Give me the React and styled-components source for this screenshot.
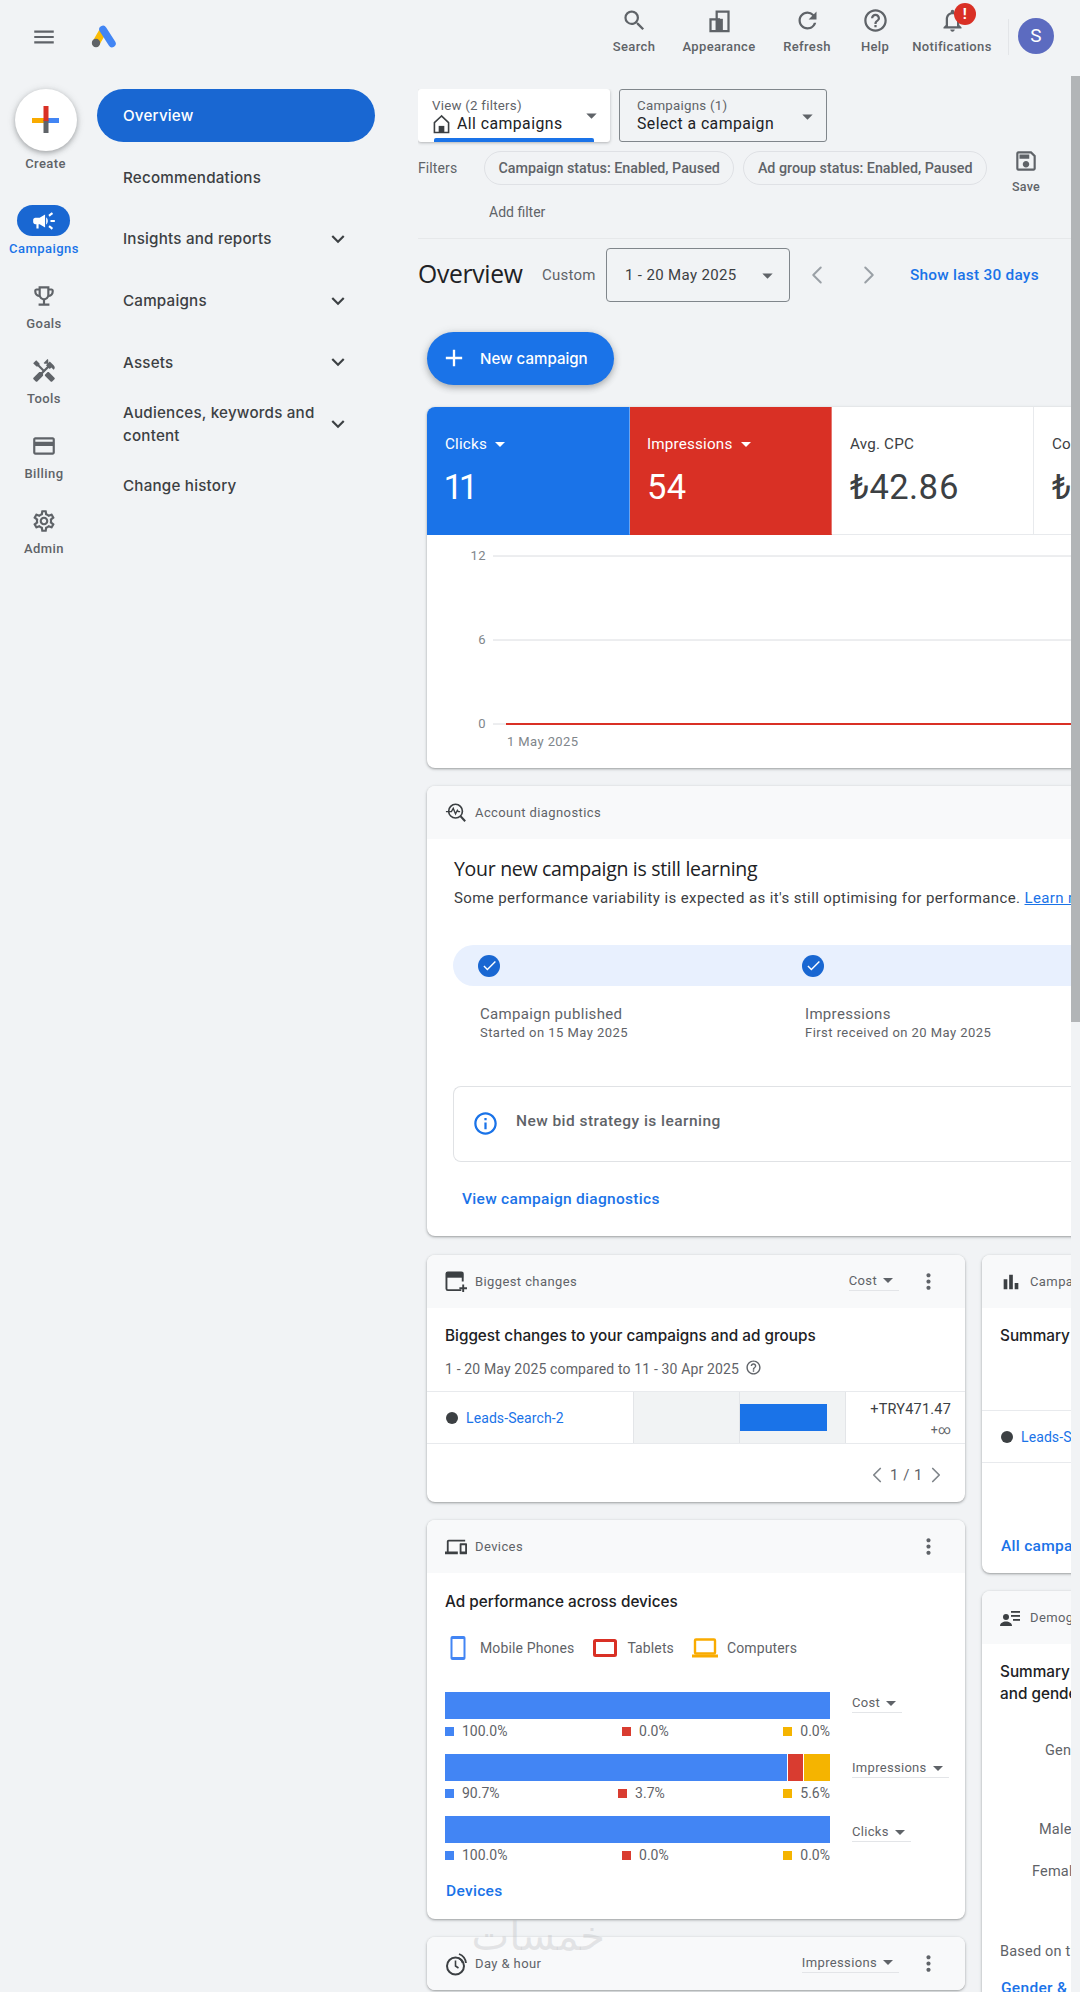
import React from 'react';
import styled, { createGlobalStyle } from 'styled-components';
import { ChevronLeft, ChevronRight } from 'lucide-react';
import {
  MdMenu, MdSearch, MdRefresh, MdHelpOutline, MdNotificationsNone, MdOutlineSave, MdArrowDropDown,
  MdExpandMore, MdAdd, MdCheck, MdMoreVert, MdOutlineInfo, MdBarChart,
  MdOutlineDevices, MdCampaign, MdOutlineEmojiEvents, MdHandyman, MdOutlineCreditCard,
  MdOutlineSettings, MdOutlineHelpOutline,
} from 'react-icons/md';

const sans = `Roboto, "Liberation Sans", sans-serif`;
const gsans = `Inter, "Open Sans", Roboto, sans-serif`;
const osans = `"Open Sans", Roboto, sans-serif`;

const Global = createGlobalStyle`
  html, body { margin: 0; padding: 0; background: #f1f3f5; }
  body { font-family: ${sans}; color: #3c4043; }
  * { box-sizing: border-box; }
`;

const Page = styled.div`
  position: relative; width: 1080px; height: 1992px; overflow: hidden; background: #f1f3f5;
`;
const TopBar = styled.header`
  display: flex; align-items: flex-start; height: 72px; padding-right: 26px;
`;
const Burger = styled.div`
  display: flex; margin: 24px 0 0 31px; color: #5f6368; font-size: 26px; width: 58px;
`;
const Logo = styled.svg`
  width: 30px; height: 28px; margin-top: 22px;
`;
const Tools = styled.div`
  display: flex; margin-left: auto; padding-top: 7px;
`;
const ToolItem = styled.div`
  position: relative; display: flex; flex-direction: column; align-items: center;
  width: ${p => p.$w}px; color: #5f6368; font-size: 13px; font-weight: 500; letter-spacing: .35px;
  svg { font-size: 27px; display: block; }
  span { margin-top: 5px; line-height: 16px; white-space: nowrap; }
`;
const Badge = styled.b`
  position: absolute; top: -4px; left: 50%; margin-left: 2px; width: 22px; height: 22px; border-radius: 50%;
  background: #d93025; color: #fff; font-size: 15px; line-height: 22px; text-align: center;
`;
const VDivider = styled.div`
  width: 1px; height: 36px; background: #e3e5e8; margin: 19px 9px 0 9px;
`;
const Avatar = styled.div`
  width: 36px; height: 36px; border-radius: 50%; background: #5c6bc0; color: #fff; margin-top: 18px;
  font-size: 19px; line-height: 36px; text-align: center;
`;
const Body = styled.div`
  display: flex; align-items: flex-start; padding-top: 17px;
`;
const Rail = styled.nav`
  display: flex; flex-direction: column; align-items: center; width: 88px; flex: none;
`;
const CreateButton = styled.div`
  display: flex; align-items: center; justify-content: center; width: 62px; height: 62px; margin-left: 3px;
  border-radius: 50%; background: #fff; box-shadow: 0 2px 5px rgba(60,64,67,.35), 0 1px 8px rgba(60,64,67,.15);
`;
const CreateLabel = styled.div`
  margin: 5px 0 33px 3px; font-size: 13px; line-height: 16px; font-weight: 500; color: #5f6368; letter-spacing: .4px;
`;
const RailItem = styled.div`
  display: flex; flex-direction: column; align-items: center; height: 75px;
  color: ${p => (p.$active ? '#1a73e8' : '#5f6368')};
  font-size: 13px; font-weight: 500; letter-spacing: .45px; line-height: 16px;
  span { margin-top: 5px; }
`;
const RailIcon = styled.div`
  display: flex; align-items: center; justify-content: center; width: 53px; height: 31px; font-size: 26px;
  border-radius: 16px; background: ${p => (p.$active ? '#1967d2' : 'transparent')};
  color: ${p => (p.$active ? '#fff' : '#5f6368')};
`;
const SideNav = styled.nav`
  width: 278px; flex: none; margin-left: 9px;
`;
const NavItem = styled.div`
  display: flex; align-items: center; justify-content: space-between; min-height: 53px; padding: 0 26px 0 26px;
  margin-bottom: 8.7px; border-radius: 27px; font-family: ${gsans}; font-size: 15.2px; font-weight: 500; line-height: 23px; letter-spacing: .2px;
  background: ${p => (p.$active ? '#1967d2' : 'transparent')};
  color: ${p => (p.$active ? '#fff' : '#3c4043')};
  svg { font-size: 26px; flex: none; color: #3c4043; margin-right: -2px; }
`;
const Main = styled.main`
  width: 653px; margin-left: 43px; flex: none; overflow: hidden;
`;
const SelectorRow = styled.div`
  display: flex; gap: 9px; height: 53px;
`;
const Selector = styled.div`
  position: relative; display: flex; flex-direction: column; justify-content: center; width: ${p => p.$w}px;
  padding-left: ${p => p.$pl}px; border-radius: 3px; background: ${p => (p.$raised ? '#fff' : 'transparent')};
  border: ${p => (p.$raised ? 'none' : '1px solid #80868b')};
  box-shadow: ${p => (p.$raised ? '0 1px 3px rgba(60,64,67,.35)' : 'none')};
  overflow: hidden;
`;
const SelLabel = styled.div`
  font-size: 13.3px; line-height: 17px; color: #5f6368; letter-spacing: .25px;
`;
const SelValue = styled.div`
  display: flex; align-items: center; gap: 7px; font-size: 15.8px; font-weight: 400; line-height: 20px; color: #202124; letter-spacing: .45px;
`;
const SelArrow = styled.div`
  position: absolute; right: 6px; top: 14px; font-size: 25px; color: #5f6368; display: flex;
`;
const BlueTab = styled.div`
  position: absolute; left: 16px; right: 16px; bottom: 0; height: 4px; background: #1a73e8; border-radius: 2px 2px 0 0;
`;
const FilterArea = styled.div`
  display: flex; height: 88px; margin-top: 9px; padding-right: 15px; border-bottom: 1px solid #e6e8ea;
`;
const FilterLabel = styled.div`
  width: 66px; flex: none; line-height: 34px; font-size: 14px; color: #5f6368; letter-spacing: .1px;
`;
const FilterBody = styled.div`
  flex: 1;
`;
const ChipRow = styled.div`
  display: flex; gap: 9px;
`;
const Chip = styled.div`
  height: 34px; line-height: 32px; padding: 0 13.5px; border: 1px solid #dfe1e5; border-radius: 17px;
  font-size: 14.3px; font-weight: 500; color: #5f6368; white-space: nowrap;
`;
const AddFilter = styled.div`
  margin: 17px 0 0 5px; font-size: 14px; line-height: 20px; color: #5f6368;
`;
const SaveCol = styled.div`
  display: flex; flex-direction: column; align-items: center; width: 60px; flex: none; color: #5f6368; margin-top: -3px;
  font-size: 12.5px; font-weight: 500; letter-spacing: .2px;
  svg { font-size: 26px; display: block; }
  span { margin-top: 5px; }
`;
const DateRow = styled.div`
  display: flex; align-items: center; height: 54px; margin-top: 9px;
`;
const PageTitle = styled.h1`
  margin: -3px 0 0; width: 124px; font-size: 24.7px; font-weight: 400; color: #202124; font-family: ${osans}; letter-spacing: -.3px;
`;
const Custom = styled.div`
  width: 64px; font-size: 15px; color: #5f6368; letter-spacing: .25px;
`;
const DateBox = styled.div`
  display: flex; align-items: center; justify-content: space-between; width: 184px; height: 54px;
  padding: 0 9px 0 18px; border: 1px solid #80868b; border-radius: 4px;
  font-size: 15px; color: #3c4043; letter-spacing: .35px;
  svg { font-size: 25px; color: #5f6368; }
`;
const DateNav = styled.div`
  display: flex; align-items: center; justify-content: center; width: 52px; color: #9aa0a6;
  margin-left: ${p => p.$ml || 0}px;
`;
const ShowLast = styled.div`
  margin-left: 15px; font-size: 15.4px; font-weight: 500; color: #1a73e8; letter-spacing: .25px; white-space: nowrap;
`;
const Content = styled.div`
  padding-left: 9px; width: 1300px;
`;
const NewCampaign = styled.div`
  display: flex; align-items: center; width: 187px; height: 53px; margin-top: 30px; padding-left: 13px; gap: 12px;
  border-radius: 27px; background: #1a73e8; color: #fff; font-size: 15.1px; font-family: ${gsans}; font-weight: 500; padding-bottom: 1px;
  box-shadow: 0 3px 6px rgba(60,64,67,.3), 0 1px 10px rgba(60,64,67,.15);
  svg { font-size: 28px; }
`;
const Card = styled.section`
  width: ${p => p.$w || 1100}px; height: ${p => (p.$h ? `${p.$h}px` : 'auto')}; margin-top: ${p => p.$mt ?? 18}px; border-radius: 8px; background: #fff; overflow: hidden;
  box-shadow: 0 1px 2px rgba(60,64,67,.35), 0 1px 3px 1px rgba(60,64,67,.12);
`;
const StatRow = styled.div`
  display: flex; height: 128px;
`;
const Stat = styled.div`
  width: ${p => p.$w || 202}px; flex: none; padding: 27px 0 0 ${p => p.$pl ?? 18}px; background: ${p => p.$bg || '#fff'};
  color: ${p => (p.$bg ? '#fff' : '#3c4043')}; border-right: 1px solid ${p => (p.$bg ? 'rgba(255,255,255,.35)' : '#e8eaed')};
  border-bottom: 1px solid ${p => (p.$bg ? 'transparent' : '#e8eaed')};
`;
const StatLabel = styled.div`
  display: flex; align-items: center; height: 20px; font-size: 15.2px; letter-spacing: .2px;
  svg { font-size: 24px; margin-left: 1px; }
`;
const StatValue = styled.div`
  margin-top: 12px; font-size: 34.5px; line-height: 42px; letter-spacing: .3px; font-variant-numeric: proportional-nums;
`;
const Chart = styled.svg`
  display: block; width: 700px; height: 233px;
  text { font-family: ${sans}; font-size: 13px; fill: #80868b; letter-spacing: .4px; }
`;
const CardHead = styled.div`
  display: flex; align-items: center; height: 53px; padding: 0 24px 0 18px; background: #f8f9fa; font-size: 13px; color: #5f6368; letter-spacing: .4px;
`;
const HeadIcon = styled.div`
  display: flex; width: 30px; flex: none; font-size: 22px; color: #3c4043;
`;
const HeadSelect = styled.div`
  display: flex; align-items: center; height: 20px; margin-left: auto; margin-top: -2px; border-bottom: 1px solid #e3e5e8; font-size: 13px; color: #5f6368; letter-spacing: .35px;
  svg { font-size: 24px; margin: 0 -1px 0 -1px; }
`;
const MoreBtn = styled.div`
  display: flex; width: 26px; margin-left: ${p => p.$auto ? 'auto' : '16px'}; font-size: 25px; color: #5f6368; justify-content: center;
`;
const DiagBody = styled.div`
  padding: 16px 0 26px 26px;
`;
const DiagTitle = styled.div`
  padding-left: 1px; font-family: ${osans}; font-size: 19.5px; line-height: 28px; color: #202124; letter-spacing: -.3px;
`;
const DiagSub = styled.div`
  padding-left: 1px; margin-top: 5px; font-size: 15px; line-height: 20px; color: #3c4043; letter-spacing: .39px; white-space: nowrap;
  a { color: #1a73e8; text-decoration: underline; }
`;
const Band = styled.div`
  display: grid; grid-template-columns: 324px 324px; align-items: center; height: 41px; margin-top: 37px; padding-left: 25px;
  background: #e8f0fe; border-radius: 21px 0 0 21px;
`;
const CheckDot = styled.div`
  display: flex; align-items: center; justify-content: center; width: 22px; height: 22px; border-radius: 50%; background: #1967d2; color: #fff; font-size: 17px;
`;
const Steps = styled.div`
  display: grid; grid-template-columns: 325px 325px; margin-top: 18px; padding-left: 27px;
`;
const StepTitle = styled.div`
  font-size: 15px; line-height: 20px; color: #5f6368; letter-spacing: .32px;
`;
const StepSub = styled.div`
  font-size: 13px; line-height: 18px; color: #5f6368; letter-spacing: .45px;
`;
const InfoBox = styled.div`
  display: flex; height: 76px; margin-top: 44px; padding: 22px 0 0 18px; gap: 17px; border: 1px solid #e0e2e5; border-right: none; border-radius: 8px 0 0 8px;
  font-size: 15.5px; font-weight: 500; color: #5f6368; letter-spacing: .45px;
  svg { font-size: 27px; color: #1a73e8; margin-top: 1px; }
  span { line-height: 24px; }
`;
const CardLink = styled.div`
  margin-top: ${p => p.$mt ?? 0}px; margin-left: ${p => p.$ml ?? 0}px; font-size: 15.5px; font-weight: 500; line-height: 22px; color: #1a73e8; letter-spacing: .3px; white-space: nowrap;
`;
const Columns = styled.div`
  display: flex; gap: 17px; align-items: flex-start;
`;
const Col = styled.div`
  display: flex; flex-direction: column;
`;
const WidgetTitle = styled.div`
  font-family: ${gsans}; font-size: 15.3px; font-weight: 500; line-height: 22px; color: #202124; padding: ${p => p.$pt ?? 17}px 18px 0;
  white-space: nowrap;
`;
const CompareLine = styled.div`
  display: flex; align-items: center; gap: 6px; margin-top: 12px; padding-left: 18px; font-size: 14px; line-height: 20px; color: #5f6368; letter-spacing: .15px;
  svg { font-size: 17px; margin-top: -3px; }
`;
const ChangeRow = styled.div`
  display: grid; grid-template-columns: 206px 106px 106px 120px; height: 53px; margin-top: ${p => p.$mt ?? 12}px;
  border-top: 1px solid #e8eaed; border-bottom: 1px solid #e8eaed;
`;
const NameCell = styled.div`
  display: flex; align-items: center; gap: 8px; padding-left: 19px; font-size: 14px; color: #1a73e8; letter-spacing: .1px; white-space: nowrap;
  &::before { content: ''; width: 12px; height: 12px; border-radius: 50%; background: #3c4043; }
`;
const GrayCell = styled.div`
  display: flex; align-items: center; background: #f1f3f4; border-left: 1px solid #e3e5e8;
`;
const DeltaBar = styled.div`
  width: 87px; height: 27px; background: #1a73e8;
`;
const ValueCell = styled.div`
  padding: 8px 14px 0 0; text-align: right; border-left: 1px solid #e3e5e8; font-size: 14.5px; line-height: 20px; color: #3c4043; letter-spacing: .2px;
  small { display: block; font-size: 12.5px; color: #5f6368; line-height: 19px; }
`;
const Pager = styled.div`
  display: flex; align-items: center; justify-content: flex-end; gap: 0; height: 58px; padding: 3px 16px 0 0; font-size: 15px; color: #5f6368; letter-spacing: .5px;
  svg { color: #80868b; }
`;
const Legend = styled.div`
  display: flex; align-items: center; height: 26px; margin-top: 22px; padding-left: 24px; font-size: 14px; color: #5f6368; letter-spacing: .13px;
`;
const LegendIcon = styled.div`
  display: flex; align-items: center; justify-content: center; flex: none; width: ${p => p.$w}px; margin-left: ${p => p.$ml || 0}px; margin-right: ${p => p.$mr || 0}px;
`;
const MeterGrid = styled.div`
  display: grid; grid-template-columns: 385px 1fr; grid-auto-rows: 62px; column-gap: 22px; margin-top: 31px; padding-left: 18px;
`;
const MeterBlock = styled.div`
  display: flex; flex-direction: column;
`;
const MeterBar = styled.div`
  display: flex; gap: 1px; height: 27px;
`;
const Segment = styled.div`
  width: ${p => p.$w}px; flex: ${p => (p.$grow ? 1 : 'none')}; background: ${p => p.$c};
`;
const PctRow = styled.div`
  display: flex; justify-content: space-between; height: 24px; align-items: center; font-size: 14px; color: #5f6368;
`;
const Pct = styled.div`
  display: flex; align-items: center; gap: 8px;
  &::before { content: ''; width: 9px; height: 9px; background: ${p => p.$c}; }
`;
const MeterSelect = styled.div`
  display: flex; align-items: center; align-self: start; justify-self: start; height: 21px; margin-top: ${p => p.$mt}px; border-bottom: 1px solid #e3e5e8; font-size: 13px; color: #5f6368; letter-spacing: .3px; padding-top: 1px;
  svg { font-size: 24px; margin: 0 -1px; }
`;
const RightText = styled.div`
  margin-top: ${p => p.$mt ?? 0}px; padding-left: ${p => p.$pl ?? 18}px; font-size: 14.5px; line-height: 22px; color: #5f6368; white-space: nowrap; letter-spacing: .2px;
`;
const Scroll = styled.div`
  position: absolute; top: 76px; right: 0; width: 9px; height: 946px; background: #b2b5b7;
`;
const Watermark = styled.div`
  position: absolute; left: 475px; top: 1921px; width: 130px; text-align: center; direction: rtl;
  font-family: "DejaVu Sans", sans-serif; font-size: 40px; line-height: 30px; color: rgba(190,192,195,.38); pointer-events: none;
`;

const Caret = () => <MdArrowDropDown />;

const AppearanceIcon = () => (
  <svg width="29" height="27" viewBox="0 0 24 24" fill="#5f6368">
    <path d="M3 10h5.500V3h12.500v19.500H3V10zm2 2v8.500h3.500V12H5zm5.500-7v5h2v10.500h6.500V5h-8.500z" />
    <rect x="10" y="10.500" width="5" height="10.500" />
  </svg>
);
const LogoMark = () => (
  <Logo viewBox="0 0 30 28">
    <line x1="7" y1="21" x2="14" y2="9" stroke="#fbbc04" strokeWidth="7.5" strokeLinecap="round" />
    <line x1="14" y1="7.5" x2="23" y2="21.5" stroke="#4285f4" strokeWidth="7.5" strokeLinecap="round" />
    <circle cx="7" cy="21" r="4.2" fill="#5f6368" />
  </Logo>
);
const CreatePlus = () => (
  <svg width="30" height="30" viewBox="0 0 30 30">
    <rect x="1" y="13" width="13" height="5" fill="#f9ab00" />
    <rect x="14" y="13" width="14" height="5" fill="#4285f4" />
    <rect x="12.5" y="15" width="5" height="13" fill="#5f6368" />
    <rect x="12.5" y="1" width="5" height="15" fill="#d93025" />
  </svg>
);
const HomeIconSvg = styled.svg`
  margin-left: 1px; margin-right: 0;
`;
const HomeIcon = () => (
  <HomeIconSvg width="17" height="20" viewBox="0 0 18 20" fill="none" stroke="#3c4043" strokeWidth="1.700">
    <path d="M9 1.500L1.500 8.500V19h15V8.500z" />
    <rect x="6" y="12" width="6" height="7" fill="#3c4043" stroke="none" />
  </HomeIconSvg>
);
const DiagIcon = () => (
  <svg width="22" height="22" viewBox="0 0 24 24" fill="none" stroke="#3c4043" strokeWidth="1.8">
    <circle cx="11.5" cy="10" r="7.5" />
    <path d="M17 15.5l5 5.5" strokeWidth="2.2" />
    <path d="M1 10.5h6l2-3.5 2.5 6 2-4 1 1.5h2" strokeWidth="1.5" fill="none" />
  </svg>
);
const AddCal = () => (
  <svg width="23" height="22" viewBox="0 0 24 23" fill="none" stroke="#3c4043" strokeWidth="2">
    <path d="M17 20H3a1.5 1.5 0 0 1-1.5-1.5V3A1.5 1.5 0 0 1 3 1.5h14A1.5 1.5 0 0 1 18.500 3v8" />
    <rect x="2" y="2" width="16" height="4" fill="#3c4043" />
    <path d="M19 14v8M15 18h8" />
  </svg>
);
const PeopleList = () => (
  <svg width="22" height="20" viewBox="0 0 22 20" fill="#3c4043">
    <circle cx="6" cy="9" r="3" /><path d="M0 18c0-3 3-4.500 6-4.500s6 1.500 6 4.500z" />
    <rect x="11" y="3" width="9" height="1.800" /><rect x="11" y="7" width="9" height="1.800" /><rect x="13" y="11" width="7" height="1.800" />
  </svg>
);
const ClockWaves = () => (
  <svg width="24" height="26" viewBox="0 0 24 26" fill="none" stroke="#3c4043" strokeWidth="2">
    <circle cx="10.500" cy="15" r="8.500" /><path d="M10.500 9.500V15l3 2" strokeWidth="1.600" />
    <path d="M14 3c4 1.500 6.500 4.500 7 9" strokeWidth="1.800" />
    <path d="M13 7c2.500.8 4 2.500 4.500 5" strokeWidth="1.500" />
  </svg>
);
const Tablet = () => (
  <svg width="24" height="18" viewBox="0 0 24 18"><rect x="1.500" y="1.500" width="21" height="15" fill="#fff" stroke="#d93025" strokeWidth="3" rx="1" /></svg>
);
const Laptop = () => (
  <svg width="26" height="20" viewBox="0 0 26 20"><rect x="3" y="1.500" width="20" height="14" fill="#fff" stroke="#f9ab00" strokeWidth="2.400" rx="1" /><rect x="0" y="16.500" width="26" height="3" fill="#f9ab00" /></svg>
);
const Phone = () => (
  <svg width="16" height="24" viewBox="0 0 16 24"><rect x="0.500" y="0" width="15" height="24" fill="#4285f4" rx="2" /><rect x="2.500" y="3" width="11" height="18" fill="#fff" /></svg>
);

const rail = [
  { label: 'Campaigns', icon: <MdCampaign />, active: true },
  { label: 'Goals', icon: <MdOutlineEmojiEvents /> },
  { label: 'Tools', icon: <MdHandyman /> },
  { label: 'Billing', icon: <MdOutlineCreditCard /> },
  { label: 'Admin', icon: <MdOutlineSettings /> },
];
const meters = [
  { label: 'Cost', mt: 0, segs: [[385, '#4285f4']], pct: ['100.0%', '0.0%', '0.0%'] },
  { label: 'Impressions', mt: 3, segs: [[342, '#4285f4'], [15, '#d93c30'], [25, '#f5b400']], pct: ['90.7%', '3.7%', '5.6%'] },
  { label: 'Clicks', mt: 5, segs: [[385, '#4285f4']], pct: ['100.0%', '0.0%', '0.0%'] },
];

export default function App() {
  return (
    <Page>
      <Global />
      <TopBar>
        <Burger><MdMenu /></Burger>
        <LogoMark />
        <Tools>
          <ToolItem $w={70}><MdSearch /><span>Search</span></ToolItem>
          <ToolItem $w={100}><AppearanceIcon /><span>Appearance</span></ToolItem>
          <ToolItem $w={76}><MdRefresh /><span>Refresh</span></ToolItem>
          <ToolItem $w={60}><MdHelpOutline /><span>Help</span></ToolItem>
          <ToolItem $w={94}><MdNotificationsNone /><Badge>!</Badge><span>Notifications</span></ToolItem>
        </Tools>
        <VDivider />
        <Avatar>S</Avatar>
      </TopBar>
      <Body>
        <Rail>
          <CreateButton><CreatePlus /></CreateButton>
          <CreateLabel>Create</CreateLabel>
          {rail.map(r => (
            <RailItem key={r.label} $active={r.active}>
              <RailIcon $active={r.active}>{r.icon}</RailIcon>
              <span>{r.label}</span>
            </RailItem>
          ))}
        </Rail>
        <SideNav>
          <NavItem $active>Overview</NavItem>
          <NavItem>Recommendations</NavItem>
          <NavItem>Insights and reports<MdExpandMore /></NavItem>
          <NavItem>Campaigns<MdExpandMore /></NavItem>
          <NavItem>Assets<MdExpandMore /></NavItem>
          <NavItem><span>Audiences, keywords and<br />content</span><MdExpandMore /></NavItem>
          <NavItem>Change history</NavItem>
        </SideNav>
        <Main>
          <SelectorRow>
            <Selector $w={192} $pl={14} $raised>
              <SelLabel>View (2 filters)</SelLabel>
              <SelValue><HomeIcon />All campaigns</SelValue>
              <SelArrow><Caret /></SelArrow>
              <BlueTab />
            </Selector>
            <Selector $w={208} $pl={17}>
              <SelLabel>Campaigns (1)</SelLabel>
              <SelValue>Select a campaign</SelValue>
              <SelArrow><Caret /></SelArrow>
            </Selector>
          </SelectorRow>
          <FilterArea>
            <FilterLabel>Filters</FilterLabel>
            <FilterBody>
              <ChipRow>
                <Chip>Campaign status: Enabled, Paused</Chip>
                <Chip>Ad group status: Enabled, Paused</Chip>
              </ChipRow>
              <AddFilter>Add filter</AddFilter>
            </FilterBody>
            <SaveCol><MdOutlineSave /><span>Save</span></SaveCol>
          </FilterArea>
          <DateRow>
            <PageTitle>Overview</PageTitle>
            <Custom>Custom</Custom>
            <DateBox>1 - 20 May 2025<Caret /></DateBox>
            <DateNav $ml={1}><ChevronLeft size={30} strokeWidth={1.6} /></DateNav>
            <DateNav><ChevronRight size={30} strokeWidth={1.6} /></DateNav>
            <ShowLast>Show last 30 days</ShowLast>
          </DateRow>
          <Content>
            <NewCampaign><MdAdd />New campaign</NewCampaign>
            <Card $mt={22}>
              <StatRow>
                <Stat $bg="#1a73e8" $w={203}>
                  <StatLabel>Clicks<Caret /></StatLabel>
                  <StatValue>11</StatValue>
                </Stat>
                <Stat $bg="#d93025" $pl={17}>
                  <StatLabel>Impressions<Caret /></StatLabel>
                  <StatValue>54</StatValue>
                </Stat>
                <Stat>
                  <StatLabel>Avg. CPC</StatLabel>
                  <StatValue>₺42.86</StatValue>
                </Stat>
                <Stat $w={300}>
                  <StatLabel>Cost</StatLabel>
                  <StatValue>₺471.47</StatValue>
                </Stat>
              </StatRow>
              <Chart viewBox="0 0 700 233">
                <line x1="66" x2="700" y1="21" y2="21" stroke="#dadce0" />
                <line x1="66" x2="700" y1="105" y2="105" stroke="#dadce0" />
                <line x1="66" x2="700" y1="189" y2="189" stroke="#dadce0" />
                <line x1="79" x2="700" y1="189" y2="189" stroke="#d93025" strokeWidth="2" />
                <text x="59" y="25" textAnchor="end">12</text>
                <text x="59" y="109" textAnchor="end">6</text>
                <text x="59" y="193" textAnchor="end">0</text>
                <text x="80" y="211">1 May 2025</text>
              </Chart>
            </Card>
            <Card>
              <CardHead><HeadIcon><DiagIcon /></HeadIcon>Account diagnostics</CardHead>
              <DiagBody>
                <DiagTitle>Your new campaign is still learning</DiagTitle>
                <DiagSub>Some performance variability is expected as it's still optimising for performance. <a>Learn more</a></DiagSub>
                <Band>
                  <CheckDot><MdCheck /></CheckDot>
                  <CheckDot><MdCheck /></CheckDot>
                </Band>
                <Steps>
                  <div>
                    <StepTitle>Campaign published</StepTitle>
                    <StepSub>Started on 15 May 2025</StepSub>
                  </div>
                  <div>
                    <StepTitle>Impressions</StepTitle>
                    <StepSub>First received on 20 May 2025</StepSub>
                  </div>
                </Steps>
                <InfoBox><MdOutlineInfo /><span>New bid strategy is learning</span></InfoBox>
                <CardLink $mt={26} $ml={9}>View campaign diagnostics</CardLink>
              </DiagBody>
            </Card>
            <Columns>
              <Col>
                <Card $w={538} $h={247} $mt={19}>
                  <CardHead><HeadIcon><AddCal /></HeadIcon>Biggest changes
                    <HeadSelect>Cost<Caret /></HeadSelect><MoreBtn><MdMoreVert /></MoreBtn>
                  </CardHead>
                  <WidgetTitle>Biggest changes to your campaigns and ad groups</WidgetTitle>
                  <CompareLine>1 - 20 May 2025 compared to 11 - 30 Apr 2025<MdOutlineHelpOutline /></CompareLine>
                  <ChangeRow>
                    <NameCell>Leads-Search-2</NameCell>
                    <GrayCell />
                    <GrayCell><DeltaBar /></GrayCell>
                    <ValueCell>+TRY471.47<small>+∞</small></ValueCell>
                  </ChangeRow>
                  <Pager><ChevronLeft size={26} strokeWidth={1.6} />1 / 1<ChevronRight size={26} strokeWidth={1.6} /></Pager>
                </Card>
                <Card $w={538} $h={399}>
                  <CardHead><HeadIcon><MdOutlineDevices /></HeadIcon>Devices
                    <MoreBtn $auto><MdMoreVert /></MoreBtn>
                  </CardHead>
                  <WidgetTitle $pt={18}>Ad performance across devices</WidgetTitle>
                  <Legend>
                    <LegendIcon $w={20} $mr={12} $ml={-3}><Phone /></LegendIcon>Mobile Phones
                    <LegendIcon $w={24} $ml={19} $mr={10}><Tablet /></LegendIcon>Tablets
                    <LegendIcon $w={26} $ml={18} $mr={9}><Laptop /></LegendIcon>Computers
                  </Legend>
                  <MeterGrid>
                    {meters.map(m => (
                      <React.Fragment key={m.label}>
                        <MeterBlock>
                          <MeterBar>
                            {m.segs.map((s, i) => <Segment key={i} $w={s[0]} $c={s[1]} $grow={i === m.segs.length - 1} />)}
                          </MeterBar>
                          <PctRow>
                            <Pct $c="#4285f4">{m.pct[0]}</Pct>
                            <Pct $c="#d93c30">{m.pct[1]}</Pct>
                            <Pct $c="#f5b400">{m.pct[2]}</Pct>
                          </PctRow>
                        </MeterBlock>
                        <MeterSelect $mt={m.mt}>{m.label}<Caret /></MeterSelect>
                      </React.Fragment>
                    ))}
                  </MeterGrid>
                  <CardLink $mt={2} $ml={19}>Devices</CardLink>
                </Card>
                <Card $w={538}>
                  <CardHead><HeadIcon><ClockWaves /></HeadIcon>Day &amp; hour
                    <HeadSelect>Impressions<Caret /></HeadSelect><MoreBtn><MdMoreVert /></MoreBtn>
                  </CardHead>
                </Card>
              </Col>
              <Col>
                <Card $w={400} $h={318} $mt={19}>
                  <CardHead><HeadIcon><MdBarChart /></HeadIcon>Campaigns</CardHead>
                  <WidgetTitle>Summary of how your campaigns are performing</WidgetTitle>
                  <ChangeRow $mt={63}>
                    <NameCell>Leads-Search-2</NameCell>
                  </ChangeRow>
                  <CardLink $mt={72} $ml={19}>All campaigns</CardLink>
                </Card>
                <Card $w={400}>
                  <CardHead><HeadIcon><PeopleList /></HeadIcon>Demographics</CardHead>
                  <WidgetTitle $pt={17}>Summary of how your ads are reaching people by age<br />and gender</WidgetTitle>
                  <RightText $mt={35} $pl={63}>Gender</RightText>
                  <RightText $mt={57} $pl={57}>Male</RightText>
                  <RightText $mt={20} $pl={50}>Female</RightText>
                  <RightText $mt={58}>Based on the campaigns</RightText>
                  <CardLink $mt={14} $ml={19}>Gender &amp; age</CardLink>
                </Card>
              </Col>
            </Columns>
          </Content>
        </Main>
      </Body>
      <Scroll />
      <Watermark>خمسات</Watermark>
    </Page>
  );
}
